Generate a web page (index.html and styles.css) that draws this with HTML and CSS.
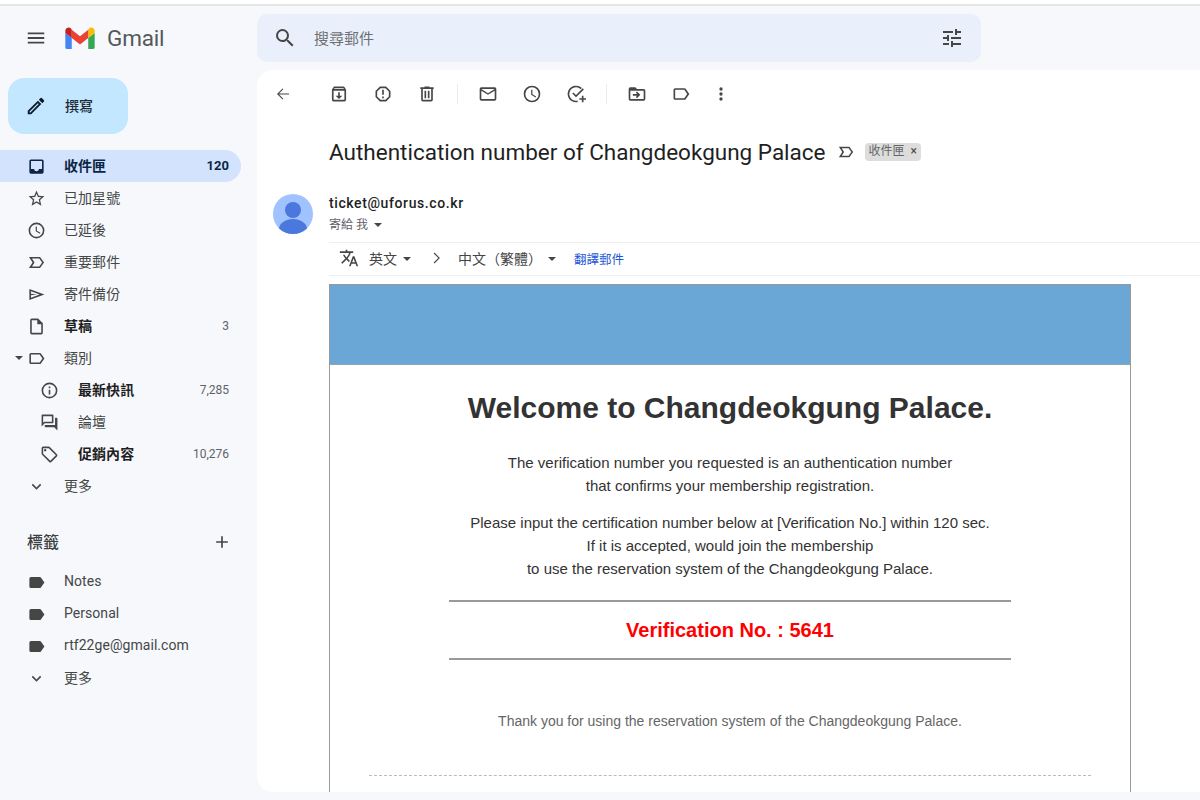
FILE: index.html
```html
<!DOCTYPE html>
<html lang="zh-Hant">
<head>
<meta charset="utf-8">
<title>Gmail</title>
<link rel="stylesheet" href="styles.css">
</head>
<body>
<div class="strip"></div>
<div class="app">
  <header class="top">
    <div class="brand">
      <svg class="ic menu" viewBox="0 0 24 24"><path d="M3 18h18v-2H3v2zm0-5h18v-2H3v2zm0-7v2h18V6H3z"/></svg>
      <svg class="mlogo" viewBox="0 0 32 24">
        <path fill="#4285f4" d="M2 24h5V12L0 6.500V22a2 2 0 0 0 2 2z"/>
        <path fill="#34a853" d="M25 24h5a2 2 0 0 0 2-2V6.500L25 12z"/>
        <path fill="#fbbc04" d="M25 3v9l7-5.500V4c0-3-3.400-4.600-5.800-2.800z"/>
        <path fill="#ea4335" d="M7 12V3l9 7 9-7v9l-9 7z"/>
        <path fill="#c5221f" d="M0 4v2.500L7 12V3L5.800 1.200C3.400-.6 0 1 0 4z"/>
      </svg>
      <span class="gmail">Gmail</span>
    </div>
    <div class="search">
      <svg class="ic" viewBox="0 0 24 24"><path d="M15.500 14h-.79l-.28-.27A6.470 6.470 0 0 0 16 9.500 6.500 6.500 0 1 0 9.500 16c1.610 0 3.090-.59 4.230-1.570l.27.280v.79l5 4.990L20.490 19l-4.990-5zm-6 0C7.010 14 5 11.990 5 9.500S7.010 5 9.500 5 14 7.010 14 9.500 11.990 14 9.500 14z"/></svg>
      <span class="placeholder">搜尋郵件</span>
      <svg class="ic tune" viewBox="0 0 24 24"><path d="M3 17v2h6v-2H3zM3 5v2h10V5H3zm10 16v-2h8v-2h-8v-2h-2v6h2zM7 9v2H3v2h4v2h2V9H7zm14 4v-2H11v2h10zm-6-4h2V7h4V5h-4V3h-2v6z"/></svg>
    </div>
  </header>
  <div class="main">
    <nav class="side">
      <button class="compose">
        <svg class="ic" viewBox="0 0 24 24"><path d="M3 17.250V21h3.750L17.800 9.940l-3.750-3.750L3 17.250zM5.920 19H5v-.920l9.060-9.060.920.920L5.920 19zM20.700 7.040a1 1 0 0 0 0-1.410l-2.340-2.340a1 1 0 0 0-1.410 0l-1.830 1.830 3.750 3.750 1.830-1.830z"/></svg>
        <span class="compose-label">撰寫</span>
      </button>
      <ul class="nav">
        <li class="row active"><svg class="ic" viewBox="0 0 24 24"><path d="M19 3H5a2 2 0 0 0-2 2v14a2 2 0 0 0 2 2h14a2 2 0 0 0 2-2V5a2 2 0 0 0-2-2zm0 12h-4a3 3 0 0 1-6 0H5V5h14v10z"/></svg><span class="lbl">收件匣</span><span class="cnt">120</span></li>
        <li class="row"><svg class="ic" viewBox="0 0 24 24"><path d="M22 9.240l-7.190-.62L12 2 9.190 8.630 2 9.240l5.460 4.730L5.820 21 12 17.270 18.180 21l-1.630-7.030L22 9.240zM12 15.400l-3.760 2.270 1-4.280-3.320-2.880 4.380-.38L12 6.100l1.710 4.040 4.380.38-3.320 2.880 1 4.280L12 15.400z"/></svg><span class="lbl">已加星號</span></li>
        <li class="row"><svg class="ic" viewBox="0 0 24 24"><path d="M12 2a10 10 0 1 0 0 20 10 10 0 0 0 0-20zm0 18a8 8 0 1 1 0-16 8 8 0 0 1 0 16zm.500-13H11v6l5.200 3.200.8-1.300-4.500-2.700V7z"/></svg><span class="lbl">已延後</span></li>
        <li class="row"><svg class="ic" viewBox="0 0 24 24"><path d="M2.500 5h14l5 7-5 7h-14l4.500-7zM6.300 7l3.200 5-3.200 5h9.200l3.600-5-3.600-5z" fill-rule="evenodd"/></svg><span class="lbl">重要郵件</span></li>
        <li class="row"><svg class="ic" viewBox="0 0 24 24"><path d="M3 5l19 7-19 7V5zm2 3v3l7.500 1L5 13v3l11-4z" fill-rule="evenodd"/></svg><span class="lbl">寄件備份</span></li>
        <li class="row bold"><svg class="ic" viewBox="0 0 24 24"><path d="M14 2H6a2 2 0 0 0-2 2v16a2 2 0 0 0 2 2h12a2 2 0 0 0 2-2V8l-6-6zm4 18H6V4h7v5h5v11z"/></svg><span class="lbl">草稿</span><span class="cnt">3</span></li>
        <li class="row caret"><i class="arrow"></i><svg class="ic" viewBox="0 0 24 24"><path d="M17.600 5.800A2 2 0 0 0 16 5H5a2 2 0 0 0-2 2v10a2 2 0 0 0 2 2h11c.7 0 1.300-.3 1.600-.8L22 12l-4.400-6.200zM16 17H5V7h11l3.500 5-3.500 5z"/></svg><span class="lbl">類別</span></li>
        <li class="row sub bold"><svg class="ic" viewBox="0 0 24 24"><path d="M11 7h2v2h-2zm0 4h2v6h-2zm1-9a10 10 0 1 0 0 20 10 10 0 0 0 0-20zm0 18a8 8 0 1 1 0-16 8 8 0 0 1 0 16z"/></svg><span class="lbl">最新快訊</span><span class="cnt">7,285</span></li>
        <li class="row sub"><svg class="ic" viewBox="0 0 24 24"><path d="M15 4v7H5.170L4 12.170V4h11m1-2H3a1 1 0 0 0-1 1v14l4-4h10a1 1 0 0 0 1-1V3a1 1 0 0 0-1-1zm5 4h-2v9H6v2a1 1 0 0 0 1 1h11l4 4V7a1 1 0 0 0-1-1z"/></svg><span class="lbl">論壇</span></li>
        <li class="row sub bold"><svg class="ic" viewBox="0 0 24 24"><path d="M21.410 11.580l-9-9A2 2 0 0 0 11 2H4a2 2 0 0 0-2 2v7c0 .55.220 1.050.590 1.420l9 9a2 2 0 0 0 2.820 0l7-7a2 2 0 0 0 0-2.840zM13 20l-9-9V4h7l9 9-7 7zM6.500 5a1.500 1.500 0 1 0 0 3 1.500 1.500 0 0 0 0-3z"/></svg><span class="lbl">促銷內容</span><span class="cnt">10,276</span></li>
        <li class="row"><svg class="ic" viewBox="0 0 24 24"><path d="M16.590 8.590L12 13.170 7.410 8.590 6 10l6 6 6-6z"/></svg><span class="lbl">更多</span></li>
      </ul>
      <div class="labels-head"><span>標籤</span><svg class="ic" viewBox="0 0 24 24"><path d="M19 13h-6v6h-2v-6H5v-2h6V5h2v6h6v2z"/></svg></div>
      <ul class="nav">
        <li class="row"><svg class="ic" viewBox="0 0 24 24"><path d="M17.600 5.800A2 2 0 0 0 16 5H5a2 2 0 0 0-2 2v10a2 2 0 0 0 2 2h11c.7 0 1.300-.3 1.600-.8L22 12z"/></svg><span class="lbl">Notes</span></li>
        <li class="row"><svg class="ic" viewBox="0 0 24 24"><path d="M17.600 5.800A2 2 0 0 0 16 5H5a2 2 0 0 0-2 2v10a2 2 0 0 0 2 2h11c.7 0 1.300-.3 1.600-.8L22 12z"/></svg><span class="lbl">Personal</span></li>
        <li class="row"><svg class="ic" viewBox="0 0 24 24"><path d="M17.600 5.800A2 2 0 0 0 16 5H5a2 2 0 0 0-2 2v10a2 2 0 0 0 2 2h11c.7 0 1.300-.3 1.600-.8L22 12z"/></svg><span class="lbl">rtf22ge@gmail.com</span></li>
        <li class="row"><svg class="ic" viewBox="0 0 24 24"><path d="M16.590 8.590L12 13.170 7.410 8.590 6 10l6 6 6-6z"/></svg><span class="lbl">更多</span></li>
      </ul>
    </nav>
    <section class="panel">
      <div class="toolbar">
        <svg class="ic back" viewBox="0 0 24 24"><path d="M20 11.250H6.800l5.600-5.600-1-1L4 12l7.400 7.350 1-1-5.600-5.600H20z"/></svg>
        <div class="tgroup first">
          <svg class="ic" viewBox="0 0 24 24"><path d="M20 6l-1.500-2.500A1.500 1.500 0 0 0 17.200 3H6.800c-.6 0-1 .2-1.300.5L4 6a1 1 0 0 0-.5 1v12a2 2 0 0 0 2 2h13a2 2 0 0 0 2-2V7c0-.4-.2-.700-.5-1zM6.800 5h10.400l.8 1H6zM5.500 19V8h13v11zm7.500-9h-2v4H8l4 4 4-4h-3z"/></svg>
          <svg class="ic" viewBox="0 0 24 24"><path d="M15.730 3H8.270L3 8.270v7.460L8.270 21h7.460L21 15.730V8.270L15.730 3zM19 14.900L14.900 19H9.100L5 14.900V9.100L9.100 5h5.800L19 9.100v5.800zM11 7h2v6h-2zm0 8h2v2h-2z"/></svg>
          <svg class="ic" viewBox="0 0 24 24"><path d="M15 4V3H9v1H4v2h1v13a2 2 0 0 0 2 2h10a2 2 0 0 0 2-2V6h1V4h-5zm2 15H7V6h10v13zM9 8h2v9H9zm4 0h2v9h-2z"/></svg>
        </div>
        <i class="tsep"></i>
        <div class="tgroup">
          <svg class="ic" viewBox="0 0 24 24"><path d="M20 4H4a2 2 0 0 0-2 2v12a2 2 0 0 0 2 2h16a2 2 0 0 0 2-2V6a2 2 0 0 0-2-2zm0 14H4V8l8 5 8-5v10zm-8-7L4 6h16l-8 5z"/></svg>
          <svg class="ic" viewBox="0 0 24 24"><path d="M12 2a10 10 0 1 0 0 20 10 10 0 0 0 0-20zm0 18a8 8 0 1 1 0-16 8 8 0 0 1 0 16zm.500-13H11v6l5.200 3.200.8-1.300-4.500-2.700V7z"/></svg>
          <svg class="ic" viewBox="0 0 24 24"><path d="M12 20a8 8 0 1 1 5.600-13.700l1.400-1.400A10 10 0 1 0 12 22c.9 0 1.500-.1 2-.2v-2a8 8 0 0 1-2 .2zM21.500 6.500L12 16l-4.500-4.500 1.400-1.400 3.100 3.100 8.100-8.100zM19 14v3h-3v2h3v3h2v-3h3v-2h-3v-3z"/></svg>
        </div>
        <i class="tsep"></i>
        <div class="tgroup">
          <svg class="ic" viewBox="0 0 24 24"><path d="M20 6h-8l-2-2H4a2 2 0 0 0-2 2v12a2 2 0 0 0 2 2h16a2 2 0 0 0 2-2V8a2 2 0 0 0-2-2zm0 12H4V8h16v10zm-8-9l-1.400 1.400 1.600 1.600H7v2h5.200l-1.600 1.600L12 17l4-4z"/></svg>
          <svg class="ic" viewBox="0 0 24 24"><path d="M17.600 5.800A2 2 0 0 0 16 5H5a2 2 0 0 0-2 2v10a2 2 0 0 0 2 2h11c.7 0 1.300-.3 1.600-.8L22 12l-4.400-6.200zM16 17H5V7h11l3.500 5-3.500 5z"/></svg>
          <svg class="ic more" viewBox="0 0 24 24"><path d="M12 8a2 2 0 1 0 0-4 2 2 0 0 0 0 4zm0 2a2 2 0 1 0 0 4 2 2 0 0 0 0-4zm0 6a2 2 0 1 0 0 4 2 2 0 0 0 0-4z"/></svg>
        </div>
      </div>
      <div class="subject">
        <h1>Authentication number of Changdeokgung Palace</h1>
        <svg class="ic" viewBox="0 0 24 24"><path d="M2.500 5h14l5 7-5 7h-14l4.500-7zM6.300 7l3.200 5-3.200 5h9.200l3.600-5-3.600-5z" fill-rule="evenodd"/></svg>
        <span class="chip">收件匣<b>×</b></span>
      </div>
      <div class="msg">
        <svg class="avatar" viewBox="0 0 40 40"><defs><clipPath id="av"><circle cx="20" cy="20" r="20"/></clipPath></defs><g clip-path="url(#av)"><rect width="40" height="40" fill="#a0c3ff"/><circle cx="20" cy="16" r="8" fill="#4a78dc"/><ellipse cx="20" cy="35" rx="14" ry="10" fill="#4a78dc"/></g></svg>
        <div class="msg-main">
          <div class="from">ticket@uforus.co.kr</div>
          <div class="to">寄給 我<i class="arrow"></i></div>
          <div class="translate">
            <svg class="ic" viewBox="0 0 24 24"><path d="M12.870 15.070l-2.540-2.510.030-.030A17.520 17.520 0 0 0 14.070 6H17V4h-7V2H8v2H1v2h11.170C11.500 7.920 10.440 9.750 9 11.350 8.070 10.320 7.300 9.190 6.690 8h-2c.73 1.630 1.730 3.170 2.980 4.560l-5.090 5.020L4 19l5-5 3.110 3.110.76-2.040zM18.500 10h-2L12 22h2l1.120-3h4.750L21 22h2l-4.500-12zm-2.620 7l1.620-4.330L19.120 17h-3.240z"/></svg>
            <span class="tl first">英文</span><i class="arrow"></i>
            <svg class="ic chev" viewBox="0 0 24 24"><path d="M9 5.500l6.500 6.500L9 18.500l-1-1 5.500-5.500L8 6.500z"/></svg>
            <span class="tl">中文（繁體）</span><i class="arrow"></i>
            <span class="link">翻譯郵件</span>
          </div>
          <article class="mail">
            <div class="band"></div>
            <div class="mail-body">
              <h2>Welcome to Changdeokgung Palace.</h2>
              <p>The verification number you requested is an authentication number<br>that confirms your membership registration.</p>
              <p class="p2">Please input the certification number below at [Verification No.] within 120 sec.<br>If it is accepted, would join the membership<br>to use the reservation system of the Changdeokgung Palace.</p>
              <div class="code">Verification No. : 5641</div>
              <p class="thanks">Thank you for using the reservation system of the Changdeokgung Palace.</p>
              <div class="dots"></div>
            </div>
          </article>
        </div>
      </div>
    </section>
  </div>
</div>
</body>
</html>
```

FILE: styles.css
```css
* { box-sizing: border-box; }
html, body { margin: 0; height: 100%; }
body {
  width: 1200px; height: 800px; overflow: hidden;
  background: #f6f8fc; color: #444746;
  font-family: Roboto, "Noto Sans CJK TC", sans-serif; font-size: 14px;
  display: flex; flex-direction: column;
}
ul { list-style: none; margin: 0; padding: 0; }
.strip { height: 6px; flex: none; background: #fff; border-bottom: 2px solid #e6e6e6; }
.ic { width: 20px; height: 20px; fill: #444746; flex: none; display: block; }
.app { flex: 1; min-height: 0; display: flex; flex-direction: column; }
.top { height: 64px; flex: none; display: flex; align-items: center; }
.brand { width: 257px; flex: none; display: flex; align-items: center; padding: 0 0 0 25px; height: 56px; }
.menu { width: 22px; height: 22px; }
.mlogo { width: 30px; height: 22px; margin-left: 18px; }
.gmail { font-size: 22.5px; color: #55585b; margin-left: 12px; letter-spacing: -.2px; padding-bottom: 1px; }
.search { width: 724px; height: 48px; background: #e9f0fb; border-radius: 10px; display: flex; align-items: center; padding: 0 17px 0 16px; }
.search .ic { width: 24px; height: 24px; }
.placeholder { font-size: 15px; color: #6d6f72; margin-left: 17px; flex: 1; padding-bottom: 2px; }
.main { flex: 1; min-height: 0; display: flex; padding-bottom: 8px; }
.side { width: 257px; flex: none; padding-top: 8px; }
.compose { display: flex; align-items: center; width: 120px; height: 56px; margin-left: 8px; border: 0; border-radius: 16px; background: #c2e7ff; color: #1f2a37; font: 500 14px Roboto, "Noto Sans CJK TC", sans-serif; padding: 0 0 0 17px; gap: 18px; }
.compose .ic { fill: #0b1b2b; width: 22px; height: 22px; }
.compose-label { padding-bottom: 3px; }
.compose + .nav { margin-top: 16px; }
.row { height: 32px; width: 241px; display: flex; align-items: center; padding: 0 12px 0 27px; color: #444746; border-radius: 0 16px 16px 0; position: relative; }
.row .ic { width: 19px; height: 19px; margin-right: 18px; }
.row.sub .ic { margin-right: 19px; }
.lbl { flex: 1; white-space: nowrap; padding-bottom: 2px; letter-spacing: .05px; }
.cnt { font-size: 12px; color: #5f6368; }
.bold .lbl { font-weight: 700; color: #1f1f1f; }
.active { background: #d3e3fd; color: #0b2545; }
.active .lbl { font-weight: 700; color: #0b2545; }
.active .cnt { font-weight: 700; color: #0b2545; font-size: 13px; padding-bottom: 2px; }
.active .ic { fill: #0b2545; }
.sub { padding-left: 40px; }
.arrow { display: inline-block; width: 0; height: 0; border: 4px solid transparent; border-top-color: #444746; border-bottom: 0; }
.caret .arrow { position: absolute; left: 15px; top: 14px; }
.labels-head { display: flex; justify-content: space-between; align-items: center; width: 241px; height: 32px; margin-top: 24px; padding: 0 9px 0 27px; font-size: 16px; font-weight: 500; color: #3c4043; }
.labels-head span { padding-bottom: 2px; }
.labels-head .ic { width: 20px; height: 20px; }
.labels-head + .nav { margin-top: 8px; }
.panel { flex: 1; min-width: 0; background: #fff; border-radius: 16px 0 0 16px; overflow: hidden; display: flex; flex-direction: column; }
.toolbar { height: 48px; flex: none; display: flex; align-items: center; padding-left: 17px; }
.tgroup { display: flex; gap: 24px; }
.tgroup.first { margin-left: 37px; }
.tgroup .ic { width: 20px; height: 20px; }
.back { width: 18px; height: 18px; }
.tgroup .more { margin-left: -4px; }
.tsep { width: 1px; height: 20px; background: #ececec; margin: 0 20px; }
.subject { display: flex; align-items: center; padding: 14px 0 0 72px; height: 54px; flex: none; }
h1 { margin: 0; font-weight: 400; font-size: 22.5px; color: #1f1f1f; white-space: nowrap; }
.subject .ic { width: 18px; height: 18px; margin-left: 11px; }
.chip { margin-left: 10px; background: #dddddd; color: #666; font-size: 12px; height: 18px; line-height: 17px; padding: 0 4px; border-radius: 4px; display: flex; gap: 6px; }
.chip b { font-weight: 400; color: #444; }
.msg { display: flex; padding: 22px 0 0 16px; flex: 1; min-height: 0; }
.avatar { width: 40px; height: 40px; flex: none; }
.msg-main { margin-left: 16px; flex: 1; min-width: 0; display: flex; flex-direction: column; }
.from { font-size: 14px; font-weight: 500; color: #1f1f1f; line-height: 18px; letter-spacing: .6px; }
.to { font-size: 12px; color: #5f6368; line-height: 20px; margin-top: 3px; display: flex; align-items: center; gap: 6px; }
.translate { margin-top: 7px; height: 34px; flex: none; border-top: 1px solid #eee; border-bottom: 1px solid #eee; display: flex; align-items: center; padding: 0 0 2px 10px; color: #444; }
.translate .ic { width: 20px; height: 20px; }
.tl { margin-right: 6px; }
.tl.first { margin-left: 10px; }
.chev { margin: 0 11px 0 16px; }
.link { color: #1a56d6; font-size: 12.5px; margin-left: 18px; }
.translate .arrow { margin-top: 1px; }
.mail { margin-top: 8px; width: 802px; flex: 1; min-height: 0; border: 1px solid #999; border-bottom: 0; overflow: hidden; font-family: "Liberation Sans", Arial, sans-serif; color: #333; text-align: center; }
.band { height: 80px; background: #6ba7d6; border-bottom: 1px solid #8aa; }
.mail-body { padding: 25px 39px 0; }
h2 { margin: 0; font-size: 30px; line-height: 36px; font-weight: 700; color: #333; }
.mail-body p { margin: 0; font-size: 15px; line-height: 23px; }
.mail-body > h2 + p { margin-top: 25px; }
.mail-body .p2 { margin-top: 14px; }
.code { width: 562px; margin: 20px auto 0; height: 60px; border-top: 2px solid #999; border-bottom: 2px solid #999; color: #f00; font-size: 20px; font-weight: 700; line-height: 56px; }
.mail-body .thanks { color: #666; margin-top: 50px; font-size: 14px; }
.dots { margin-top: 42px; border-top: 1px dashed #bbb; }
```
